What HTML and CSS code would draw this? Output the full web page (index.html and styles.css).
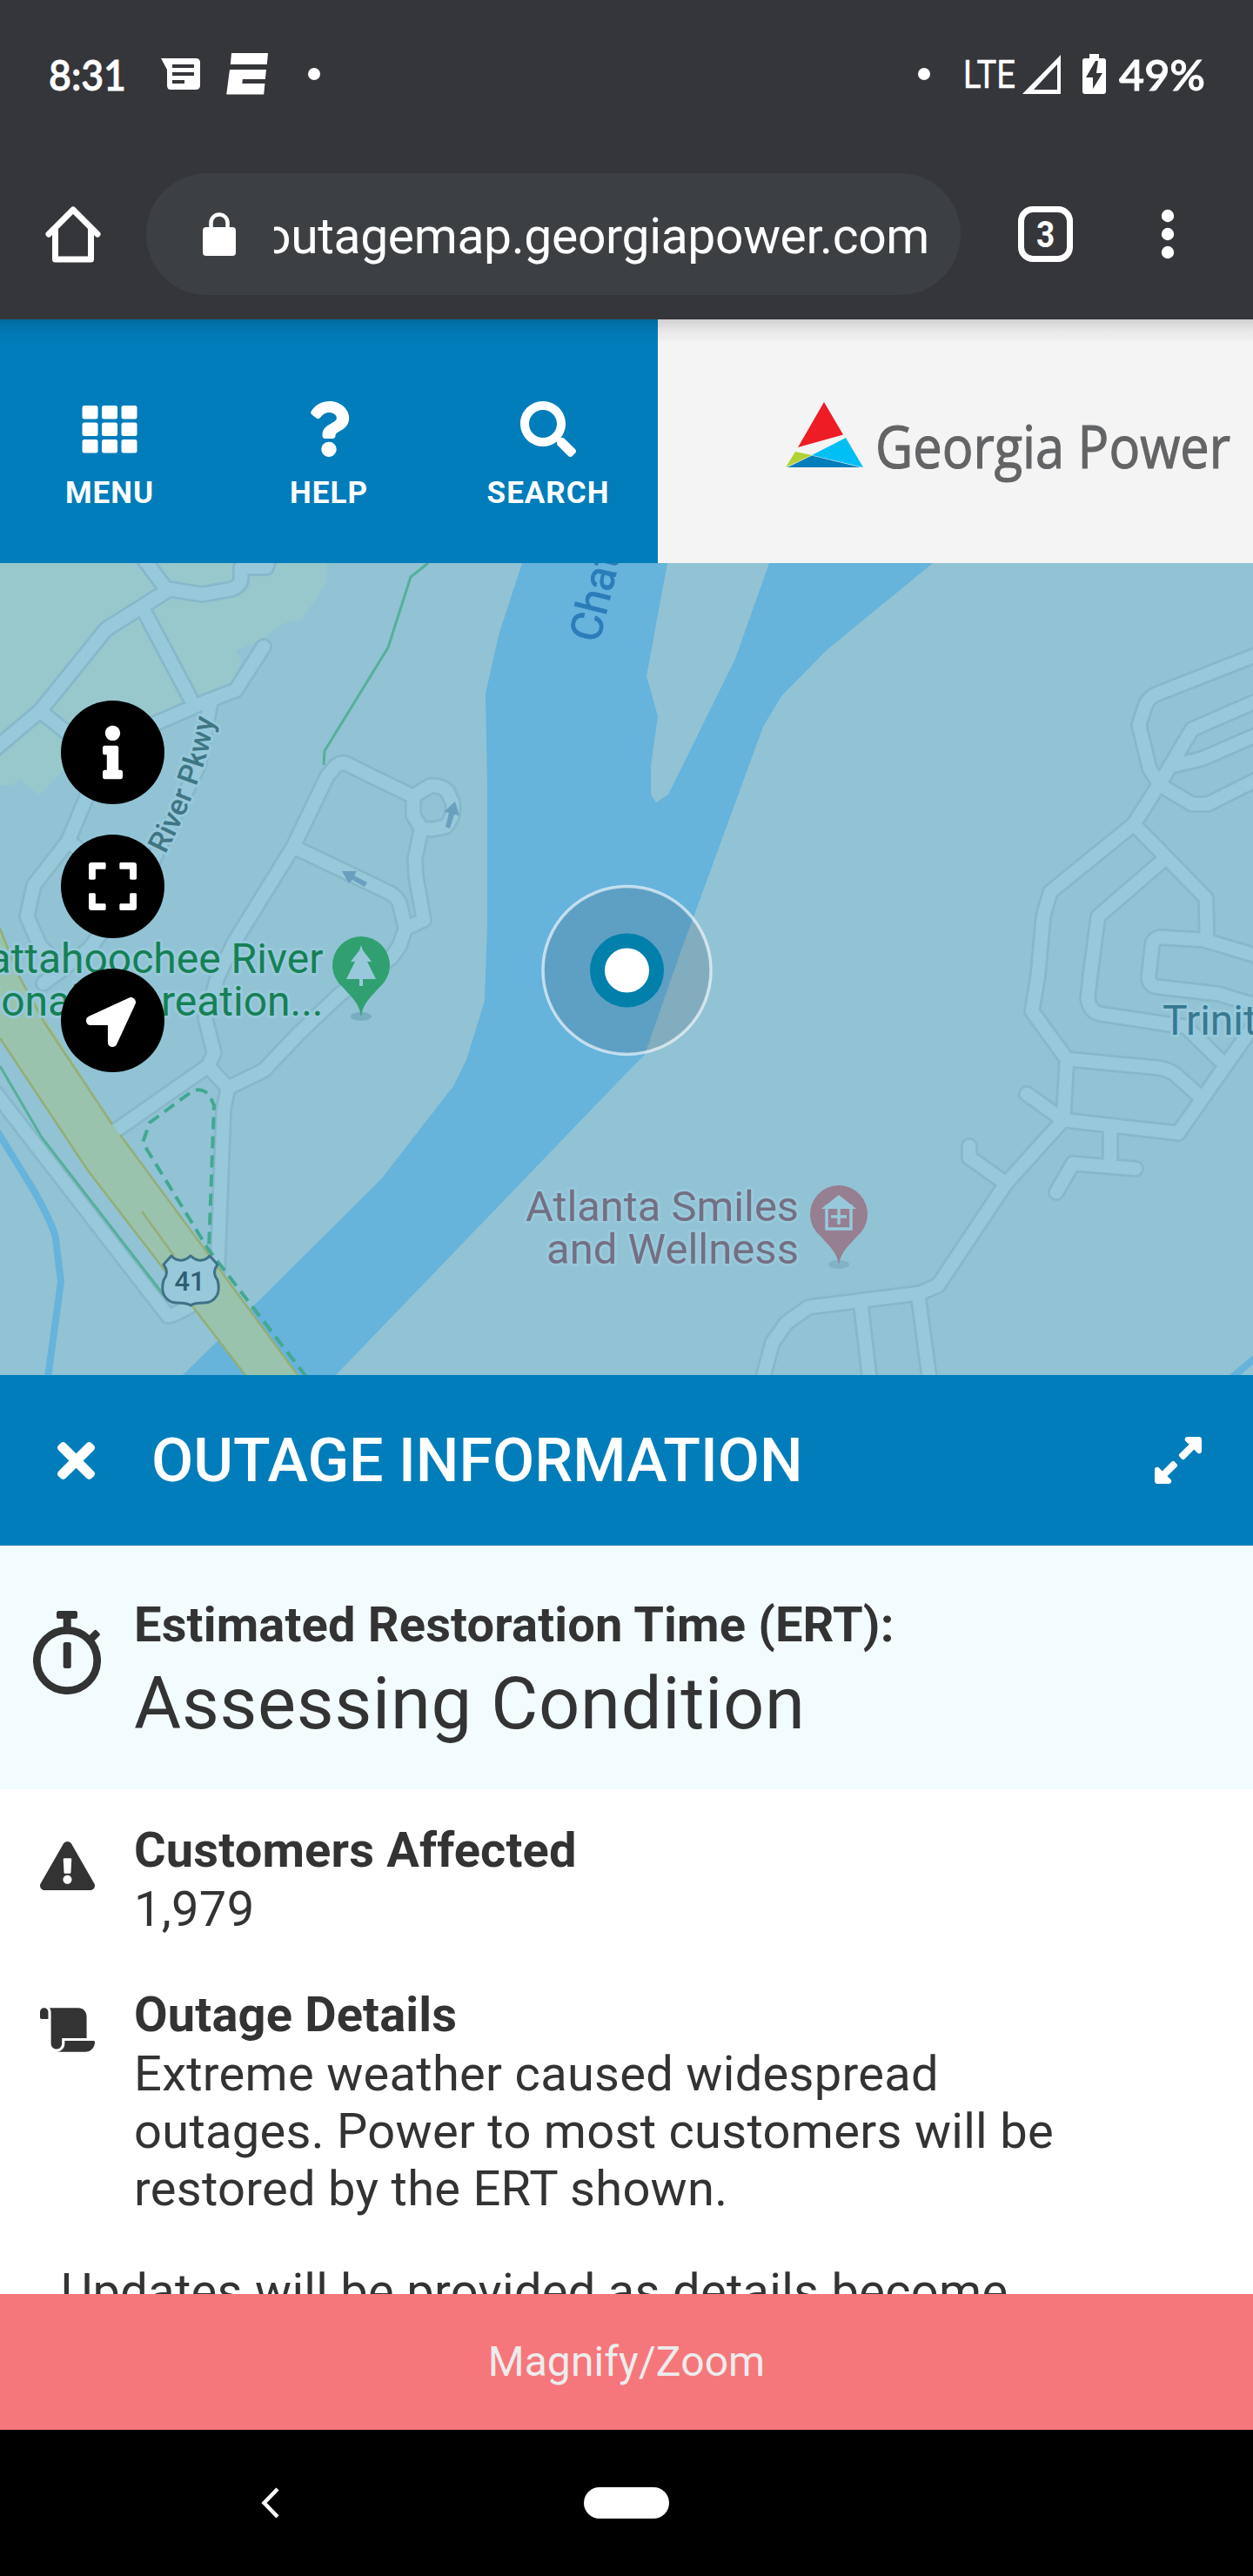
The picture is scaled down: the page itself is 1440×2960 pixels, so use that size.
FILE: index.html
```html
<!DOCTYPE html>
<html lang="en">
<head>
<meta charset="utf-8">
<title>Outage Map</title>
<link rel="stylesheet" href="styles.css">
</head>
<body>
<div class="phone">
  <div class="status">
    <svg class="status-art" viewBox="0 0 1440 180" fill="#fff">
      <text class="clock" x="56" y="104" textLength="89" lengthAdjust="spacingAndGlyphs">8:31</text>
      <path fill-rule="evenodd" d="M185 67h40q5 0 5 5v26q0 5-5 5h-29q-4 0-4-5V80zM198 74v4h25v-4zM198 83v4h25v-4zM198 92v4h14v-4z"/>
      <path d="M266 61h42l-1.200 13h-42zM264 80h42l-1.200 11h-26l-.4 5h26l-1.200 12.500h-43z"/>
      <circle cx="361" cy="85" r="7"/>
      <circle cx="1062" cy="85" r="7"/>
      <text class="lte" x="1107" y="101" textLength="60" lengthAdjust="spacingAndGlyphs">LTE</text>
      <path fill-rule="evenodd" d="M1219 63v45h-44zM1215 74l-27 29h27z"/>
      <path fill-rule="evenodd" d="M1252 62h11v5h5q3 0 3 3v35q0 3-3 3h-21q-3 0-3-3V70q0-3 3-3h5zM1259 70l-11 19h8v13l11-18h-7l2-14z"/>
      <text class="clock" x="1286" y="104" textLength="99" lengthAdjust="spacingAndGlyphs">49%</text>
    </svg>
  </div>
  <div class="browser">
    <svg class="home" viewBox="0 0 64 66" fill="none" stroke="#fff" stroke-width="7" stroke-linejoin="round" stroke-linecap="round"><path d="M4 33L32 5l28 28M11.500 28v34h41V28"/></svg>
    <div class="address">
      <svg class="lock" viewBox="0 0 38 50"><path d="M9.500 18v-6a9.500 9.500 0 0 1 19 0v6" fill="none" stroke="#fff" stroke-width="4.500"/><rect y="17" width="38" height="33" rx="4" fill="#fff"/></svg>
      <div class="url"><span>outagemap.georgiapower.com</span></div>
    </div>
    <div class="tabs"><span>3</span></div>
    <svg class="dots" viewBox="0 0 16 58" fill="#fff"><circle cx="8" cy="8" r="7.200"/><circle cx="8" cy="29" r="7.200"/><circle cx="8" cy="50" r="7.200"/></svg>
  </div>

  <header class="header">
    <nav class="nav">
      <a class="nav-item">
        <svg viewBox="0 0 64 64" fill="#fff"><path d="M3 5h13q2.500 0 2.500 2.500v10.500q0 2.500-2.500 2.500H3q-2.500 0-2.500-2.500V7.500Q.5 5 3 5zm22.500 0h13q2.500 0 2.500 2.500v10.500q0 2.500-2.500 2.500h-13q-2.500 0-2.500-2.500V7.500q0-2.500 2.500-2.500zM48 5h13q2.500 0 2.500 2.500v10.500q0 2.500-2.500 2.500H48q-2.500 0-2.500-2.500V7.500Q45.500 5 48 5zM3 24.500h13q2.500 0 2.500 2.500v10.500q0 2.500-2.500 2.500H3q-2.500 0-2.500-2.500V27q0-2.500 2.500-2.500zm22.500 0h13q2.500 0 2.500 2.500v10.500q0 2.500-2.500 2.500h-13q-2.500 0-2.500-2.500V27q0-2.500 2.500-2.500zm22.500 0h13q2.500 0 2.500 2.500v10.500q0 2.500-2.500 2.500H48q-2.500 0-2.500-2.500V27q0-2.500 2.500-2.500zM3 44h13q2.500 0 2.500 2.500V57q0 2.500-2.500 2.500H3Q.5 59.500.5 57V46.500Q.5 44 3 44zm22.500 0h13q2.500 0 2.500 2.500V57q0 2.500-2.500 2.500h-13Q23 59.500 23 57V46.500q0-2.500 2.500-2.500zM48 44h13q2.500 0 2.500 2.500V57q0 2.500-2.500 2.500H48q-2.500 0-2.500-2.500V46.500Q45.500 44 48 44z"/></svg>
        <span>MENU</span>
      </a>
      <a class="nav-item">
        <svg viewBox="-64 0 512 512" fill="#fff"><path d="M202.021 0C122.202 0 70.503 32.703 29.914 91.026c-7.363 10.580-5.093 25.086 5.178 32.874l43.138 32.709c10.373 7.865 25.132 6.026 33.253-4.148 25.049-31.381 43.630-49.449 82.757-49.449 30.764 0 68.816 19.799 68.816 49.631 0 22.552-18.617 34.134-48.993 51.164-35.423 19.860-82.299 44.576-82.299 106.405V320c0 13.255 10.745 24 24 24h72.471c13.255 0 24-10.745 24-24v-5.773c0-42.860 125.268-44.645 125.268-160.627C377.504 66.256 286.902 0 202.021 0zM192 373.459c-38.196 0-69.271 31.075-69.271 69.271 0 38.195 31.075 69.270 69.271 69.270s69.271-31.075 69.271-69.271-31.075-69.270-69.271-69.270z"/></svg>
        <span>HELP</span>
      </a>
      <a class="nav-item">
        <svg viewBox="0 0 512 512" fill="#fff"><path d="M505 442.700L405.300 343c-4.500-4.500-10.600-7-17-7H372c27.600-35.300 44-79.700 44-128C416 93.100 322.900 0 208 0S0 93.100 0 208s93.100 208 208 208c48.300 0 92.700-16.400 128-44v16.300c0 6.400 2.500 12.500 7 17l99.700 99.700c9.400 9.400 24.600 9.400 33.900 0l28.300-28.300c9.400-9.400 9.400-24.600.1-34zM208 336c-70.700 0-128-57.200-128-128 0-70.700 57.200-128 128-128 70.700 0 128 57.200 128 128 0 70.700-57.200 128-128 128z"/></svg>
        <span>SEARCH</span>
      </a>
    </nav>
    <div class="brand">
      <svg viewBox="900 450 520 110">
        <path fill="#ee1c25" d="M947 462l22 37.500-52 14.500z"/>
        <path fill="#00bff5" d="M972 503l20 34-59-14z"/>
        <path fill="#b2d235" d="M914 519l19 4-30 14z"/>
        <path fill="#007dba" d="M933 523.500l56 13.500h-84z"/>
        <text x="1006" y="538" textLength="408" lengthAdjust="spacingAndGlyphs">Georgia Power</text>
      </svg>
    </div>
  </header>

  <main class="map">
    <svg class="map-art" viewBox="0 647 1440 933">
      <defs>
        <g id="roads">
          <path d="M160 635L191 677M311 635L306 652H277V666Q276 673 266 677L232 683 195 677 122 723 46 817-5 860M165 701L219 803M303 743L271 793 237 806 177 832 130 865M46 817L110 868M242 808L228 880 177 987 103 1090 50 1130M112 880L99 917 78 967 39 1017 31 1053 46 1087 70 1110M80 967L120 1003"/>
          <path d="M475 915L429 893 401 879Q393 874 385 881L376 892 337 973 269 1083 250 1123 236 1170 246 1210 239 1225 262 1250M239 1225L133 1299M475 915L494 903Q507 902 514 909L520 922Q523 938 512 950L497 953 484 952 475 937ZM484 952L477 987 478 1007 487 1057 466 1067 459 1037Q455 1030 448 1026L337 973M466 1067L459 1087 450 1100 390 1143 344 1187 303 1230 262 1250 257 1275 250 1460M-5 1256L193 1512Q200 1512 228 1495"/>
          <path d="M1450 750L1328 798Q1317 804 1315 815L1309 833 1321 883 1333 902 1370 924H1388L1450 893M1450 803L1370 838 1333 900 1303 947 1207 1025 1199 1053 1193 1120 1186 1162 1226 1217 1222 1287M1351 879L1381 872 1450 842M1303 947L1386 1032 1387 1080M1335 990L1262 1053 1253 1120 1250 1147Q1252 1162 1264 1165L1363 1180 1404 1220M1450 1100L1383 1080 1334 1077Q1325 1078 1324 1087L1320 1124Q1321 1132 1330 1134L1400 1142 1450 1157M1450 1165L1354 1302 1222 1287M1226 1217L1331 1227Q1343 1229 1350 1234L1379 1260M1180 1257L1222 1287 1156 1360 1078 1477 1057 1486 929 1502 904 1520 888 1542 875 1590M1114 1317V1330L1156 1360M1276 1293V1338M1305 1343L1233 1337 1214 1370M989 1495L1000 1590M1055 1487L1069 1590"/>
        </g>
        <clipPath id="frame"><rect x="0" y="647" width="1440" height="933"/></clipPath>
      </defs>
      <g clip-path="url(#frame)">
        <rect x="0" y="647" width="1440" height="933" fill="#91c3d4"/>
        <path fill="#98c7cc" d="M0 647H376L375 670 347 712 326 716 301 735 271 748 278 760 265 785 225 805 170 827 70 887 45 914 23 896 14 902H0z"/>
        <path fill="#66b3dc" d="M600 647L573 730 558 797 560 907V1060L557 1150 536 1218 521 1248 438 1355 294 1498 210 1580H386L720 1233 741 1212 780 1100 877 835 898 800 950 747 1072 647H884L845 757 768 913 754 922 748 913V880L756 823 743 777 767 647z"/>
        <path class="stream" d="M-3 1300L40 1370Q62 1410 64 1423L70 1473 54 1590M1450 1554L1405 1592"/>
        <use href="#roads" class="road-case"/>
        <use href="#roads" class="road-fill"/>
        <path fill="#99c3ac" d="M0 1067L21 1120 129 1292 342 1580H282L101 1345 0 1193z"/>
        <path class="hwy-edge" d="M0 1067L21 1120 51 1175 129 1292M138 1304L342 1580M282 1580L101 1345 0 1193M163 1392L200 1443"/>
        <path class="trail" d="M492 647L472 663 446 744 373 863 372 879M0 1225L48 1307 188 1488"/>
        <path class="trail dashed" d="M352 1582L239 1435 164 1313 172 1290 218 1256Q228 1248 240 1257L246 1270 240 1435"/>
        <g fill="#6a9fc0">
          <path d="M523 921l5 16-6-1-5 16-5-2 4-16-6-1z"/>
          <path d="M393 1001h17l-3 5 15 8-3 5-14-8-4 4z"/>
        </g>

        <g class="labels">
          <text class="river" transform="translate(688 740) rotate(-76)">Chat</text>
          <path id="pkwy" d="M190 982Q222 921 240 860L254 790" fill="none"/>
          <text class="pkwy"><textPath href="#pkwy" textLength="167" lengthAdjust="spacingAndGlyphs">River Pkwy</textPath></text>
          <text class="park" x="371.500" y="1117.500" text-anchor="end">Chattahoochee River</text>
          <text class="park" x="371.500" y="1166.500" text-anchor="end">National Recreation...</text>
          <text class="health" x="604" y="1402.500" textLength="314" lengthAdjust="spacingAndGlyphs">Atlanta Smiles</text>
          <text class="health" x="628" y="1451.500" textLength="290" lengthAdjust="spacingAndGlyphs">and Wellness</text>
          <text class="place" x="1336" y="1189">Trinity</text>
        </g>

        <ellipse cx="415" cy="1168" rx="12" ry="5" fill="#78adbf"/>
        <path fill="#30a070" d="M415 1168C413 1152 402 1144 394 1134.500A33 33 0 1 1 436 1134.500C428 1144 417 1152 415 1168z"/>
        <path fill="#98c9db" d="M415 1086l2 6 10 13h-5l10 20h-15v8h-4v-8h-15l10-20h-5l10-13z"/>
        <ellipse cx="964" cy="1453" rx="12" ry="5" fill="#82b3c4"/>
        <path fill="#967f90" d="M964 1453C962 1438 951 1430 943 1420.500A33 33 0 1 1 985 1420.500C977 1430 966 1438 964 1453z"/>
        <path fill="none" stroke="#98c9db" stroke-width="3.500" d="M950 1386v26h28v-26zM964 1389v18M955 1398h18"/>
        <path fill="#98c9db" d="M944 1389l20-16 20 16z"/>

        <path fill="#98c9db" stroke="#3f7187" stroke-width="3" stroke-linejoin="round" d="M197 1443q5 6 13 5 5-1 9-5 4 4 9 5 8 1 13-5l9 10q-7 9 0 18 3 11-1 18-5 8-14 8-12 0-16 3-4-3-16-3-9 0-14-8-4-7-1-18 7-9 0-18z"/>
        <text class="shield" x="218" y="1483" text-anchor="middle">41</text>

        <circle cx="720.500" cy="1115" r="96.500" fill="rgba(66,80,97,.19)" stroke="rgba(255,255,255,.62)" stroke-width="3.500"/>
        <circle cx="720.500" cy="1115" r="34" fill="#fff" stroke="#0080ab" stroke-width="17"/>
      </g>
    </svg>
    <div class="controls">
      <button class="round"><svg width="23" height="63" viewBox="0 0 192 512"><path d="M20 424.229h20V279.771H20c-11.046 0-20-8.954-20-20V212c0-11.046 8.954-20 20-20h112c11.046 0 20 8.954 20 20v212.229h20c11.046 0 20 8.954 20 20V492c0 11.046-8.954 20-20 20H20c-11.046 0-20-8.954-20-20v-47.771c0-11.046 8.954-20 20-20zM96 0C56.235 0 24 32.235 24 72s32.235 72 72 72 72-32.235 72-72S135.764 0 96 0z"/></svg></button>
      <button class="round"><svg width="55" height="63" viewBox="0 0 448 512"><path d="M0 180V56c0-13.300 10.700-24 24-24h124c6.600 0 12 5.400 12 12v40c0 6.600-5.400 12-12 12H64v84c0 6.600-5.400 12-12 12H12c-6.600 0-12-5.400-12-12zM288 44v40c0 6.600 5.400 12 12 12h84v84c0 6.600 5.400 12 12 12h40c6.600 0 12-5.400 12-12V56c0-13.300-10.700-24-24-24H300c-6.600 0-12 5.400-12 12zm148 276h-40c-6.600 0-12 5.400-12 12v84h-84c-6.600 0-12 5.400-12 12v40c0 6.600 5.400 12 12 12h124c13.300 0 24-10.700 24-24V332c0-6.600-5.400-12-12-12zM160 468v-40c0-6.600-5.400-12-12-12H64v-84c0-6.600-5.400-12-12-12H12c-6.600 0-12 5.400-12 12v124c0 13.300 10.700 24 24 24h124c6.600 0 12-5.400 12-12z"/></svg></button>
      <button class="round"><svg class="arrow" width="57" height="57" viewBox="0 0 512 512"><path d="M444.520 3.520L28.740 195.420c-47.970 22.390-31.980 92.750 19.190 92.750h175.910v175.910c0 51.170 70.360 67.170 92.750 19.190l191.900-415.780c15.990-38.390-25.590-79.970-63.970-63.970z"/></svg></button>
    </div>
  </main>

  <section class="panel-title">
    <svg class="close" viewBox="0 80 352 352" fill="#fff"><path d="M242.720 256l100.070-100.070c12.280-12.280 12.280-32.190 0-44.480l-22.240-22.240c-12.280-12.280-32.190-12.280-44.480 0L176 189.280 75.930 89.210c-12.280-12.280-32.190-12.280-44.480 0L9.210 111.450c-12.280 12.280-12.280 32.190 0 44.480L109.280 256 9.210 356.070c-12.280 12.280-12.280 32.190 0 44.480l22.240 22.240c12.280 12.280 32.200 12.280 44.480 0L176 322.720l100.070 100.070c12.280 12.280 32.200 12.280 44.480 0l22.240-22.240c12.280-12.280 12.280-32.190 0-44.480L242.720 256z"/></svg>
    <h1>OUTAGE INFORMATION</h1>
    <svg class="grow" viewBox="0 32 448 448" fill="#fff"><path d="M212.686 315.314L120 408l32.922 31.029c15.120 15.120 4.412 40.971-16.970 40.971h-112C10.697 480 0 469.255 0 456V344c0-21.382 25.803-32.090 40.922-16.971L72 360l92.686-92.686c6.248-6.248 16.379-6.248 22.627 0l25.373 25.373c6.249 6.248 6.249 16.378 0 22.627zm22.628-118.628L328 104l-32.922-31.029C279.958 57.851 290.666 32 312.048 32h112C437.303 32 448 42.745 448 56v112c0 21.382-25.803 32.090-40.922 16.971L376 152l-92.686 92.686c-6.248 6.248-16.379 6.248-22.627 0l-25.373-25.373c-6.249-6.248-6.249-16.378 0-22.627z"/></svg>
  </section>

  <section class="ert">
    <svg class="watch" viewBox="0 0 78 96" fill="#333"><circle cx="39" cy="57" r="34.700" fill="none" stroke="#333" stroke-width="8.700"/><rect x="27" y="0" width="24" height="9" rx="2.500"/><rect x="34.700" y="5" width="9" height="17"/><rect x="34.700" y="36" width="9" height="30" rx="2.500"/><rect x="60" y="26" width="17" height="8.500" rx="2" transform="rotate(-45 68.500 30)"/></svg>
    <div>
      <h2>Estimated Restoration Time (ERT):</h2>
      <p class="big">Assessing Condition</p>
    </div>
  </section>

  <section class="details">
    <div class="row">
      <svg class="warn" viewBox="0 0 576 512" fill="#333"><path d="M569.517 440.013C587.975 472.007 564.806 512 527.940 512H48.054c-36.937 0-59.999-40.055-41.577-71.987L246.423 23.985c18.467-32.009 64.720-31.951 83.154 0l239.940 416.028zM288 354c-25.405 0-46 20.595-46 46s20.595 46 46 46 46-20.595 46-46-20.595-46-46-46zm-43.673-165.346l7.418 136c.347 6.364 5.609 11.346 11.982 11.346h48.546c6.373 0 11.635-4.982 11.982-11.346l7.418-136c.375-6.874-5.098-12.654-11.982-12.654h-63.383c-6.884 0-12.356 5.780-11.981 12.654z"/></svg>
      <div>
        <h2>Customers Affected</h2>
        <p>1,979</p>
      </div>
    </div>
    <div class="row">
      <svg class="scroll" viewBox="0 0 640 512" fill="#333"><path d="M48 0C21.530 0 0 21.530 0 48v64c0 8.840 7.160 16 16 16h80V48C96 21.530 74.470 0 48 0zm208 412.570V352h288V96c0-52.940-43.060-96-96-96H111.590C121.740 13.410 128 29.920 128 48v368c0 38.870 34.650 69.650 74.750 63.120C234.220 474 256 444.460 256 412.570zM288 384v32c0 52.930-43.060 96-96 96h336c61.860 0 112-50.140 112-112 0-8.840-7.160-16-16-16H288z"/></svg>
      <div>
        <h2>Outage Details</h2>
        <p>Extreme weather caused widespread<br>outages. Power to most customers will be<br>restored by the ERT shown.</p>
      </div>
    </div>
    <p class="updates">Updates will be provided as details become</p>
  </section>

  <div class="magnify">Magnify/Zoom</div>
  <div class="sysnav">
    <svg class="back" viewBox="0 0 21 36" fill="none" stroke="#fff" stroke-width="4.500"><path d="M19 2L3.500 18 19 34"/></svg>
    <div class="pill"></div>
  </div>
</div>
</body>
</html>
```

FILE: styles.css
```css
* { box-sizing: border-box; }
body { margin: 0; font-family: Roboto, "Liberation Sans", sans-serif; color: #333; }
h1, h2, p { margin: 0; font-weight: 400; }
svg { display: block; flex: none; }

.phone { width: 1440px; height: 2960px; display: flex; flex-direction: column; overflow: hidden; background: #fff; }
.phone > * { flex: none; }

.status { height: 180px; background: #35363a; }
.status-art { width: 1440px; height: 180px; }
.clock { font-family: Lato, Roboto, sans-serif; font-size: 48px; font-weight: 600; stroke: #fff; stroke-width: .8px; }
.lte { font-size: 43.500px; stroke: #fff; stroke-width: .5px; }

.browser { height: 187px; padding: 19px 90px 28px 52px; display: flex; align-items: center; background: #35363a; }
.home { width: 64px; height: 66px; }
.address { width: 936px; height: 140px; margin-left: 52px; padding: 0 36px 0 65px; display: flex; align-items: center; border-radius: 70px; background: #3c4043; }
.lock { width: 38px; height: 50px; }
.url { flex: 1; margin-left: 44px; display: flex; justify-content: flex-end; overflow: hidden; font-size: 57px; line-height: 80px; letter-spacing: -.35px; color: #fff; white-space: nowrap; padding-top: 5px; }
.tabs { width: 63px; height: 64px; margin-left: 66px; border: 7px solid #fff; border-radius: 17px; color: #fff; font-size: 43px; font-weight: 700; line-height: 50px; text-align: center; }
.tabs span { display: block; transform: scaleX(.86); }
.dots { width: 16px; height: 58px; margin-left: 101px; }

.header { height: 280px; display: flex; position: relative; }
.header::before { content: ""; position: absolute; inset: 0 0 auto; height: 28px; background: linear-gradient(rgba(0,0,0,.15), rgba(0,0,0,.05) 45%, transparent); }
.nav { width: 756px; display: flex; background: #007dba; }
.nav-item { flex: 1; padding-top: 94px; display: flex; flex-direction: column; align-items: center; color: #fff; font-size: 35px; font-weight: 700; line-height: 42px; letter-spacing: 1px; }
.nav-item svg { width: 64px; height: 64px; }
.nav-item span { margin-top: 21px; }
.brand { flex: 1; padding: 83px 0 0 144px; background: #f4f4f4; }
.brand svg { width: 520px; height: 110px; }
.brand text { font-family: "Open Sans", "Noto Sans", sans-serif; font-size: 67px; font-weight: 500; fill: #636466; stroke: #636466; stroke-width: 1.200px; }

.map { height: 933px; position: relative; overflow: hidden; }
.map-art { width: 1440px; height: 933px; }
.road-case, .road-fill { fill: none; stroke-linecap: round; stroke-linejoin: round; }
.road-case { stroke: #87b8ca; stroke-width: 20px; }
.road-fill { stroke: #98c9db; stroke-width: 14.500px; }
.stream { fill: none; stroke: #66b3dc; stroke-width: 8px; }
.hwy-edge { fill: none; stroke: #94ae77; stroke-width: 2.500px; }
.trail { fill: none; stroke: #55b09a; stroke-width: 3px; }
.trail.dashed { stroke: #43a890; stroke-width: 4px; stroke-dasharray: 14 8; }
.labels text { paint-order: stroke; stroke: #98c9db; stroke-width: 6px; stroke-linejoin: round; font-size: 48px; }
.labels .river { font-size: 50px; fill: #2b7dba; stroke: #2b7dba; stroke-width: .8px; }
.labels .pkwy { font-size: 34px; font-weight: 500; fill: #3f7683; }
.labels .park { fill: #158055; }
.labels .health { fill: #746f82; }
.labels .place { fill: #367992; }
.shield { font-size: 31px; font-weight: 500; fill: #2f5e73; }

.controls { position: absolute; left: 70px; top: 158px; display: flex; flex-direction: column; gap: 35px; }
.round { width: 119px; height: 119px; padding: 0; border: 0; border-radius: 50%; display: flex; align-items: center; justify-content: center; background: #000; }
.round svg { fill: #fff; }
.round .arrow { margin: 3px 5px 0 0; }

.panel-title { height: 196px; padding: 0 59px 0 66px; display: flex; align-items: center; background: #007dba; color: #fff; }
.close { width: 43px; height: 43px; }
.panel-title h1 { flex: 1; margin-left: 65px; font-size: 70px; font-weight: 500; line-height: 90px; white-space: nowrap; }
.grow { width: 54px; height: 54px; }

h2 { font-size: 56px; line-height: 66px; font-weight: 700; letter-spacing: .16px; white-space: nowrap; }
p { font-size: 56px; line-height: 66px; letter-spacing: .3px; white-space: nowrap; }

.ert { height: 280px; padding: 58px 0 0 38px; display: flex; background: #f2fbfe; }
.watch { width: 78px; height: 96px; margin: 17px 38px 0 0; }
.ert .big { margin-top: 9px; font-size: 83px; line-height: 98px; letter-spacing: .75px; }

.details { height: 580px; padding-top: 37px; overflow: hidden; background: #fff; }
.row { display: flex; padding-left: 46px; margin-bottom: 55px; }
.row p { margin-top: 2px; }
.row svg { width: 63px; margin-right: 45px; }
.warn { height: 56px; margin-top: 23px; }
.scroll { height: 51px; margin-top: 25px; }
.updates { margin: -3px 0 0 70px; }

.magnify { height: 156px; background: #f5777b; color: #ececec; font-size: 48px; line-height: 156px; letter-spacing: .1px; text-align: center; }
.sysnav { height: 168px; padding-left: 300px; display: flex; align-items: center; background: #000; }
.back { width: 21px; height: 36px; }
.pill { width: 98px; height: 36px; margin-left: 350px; border-radius: 18px; background: #fff; }
```
